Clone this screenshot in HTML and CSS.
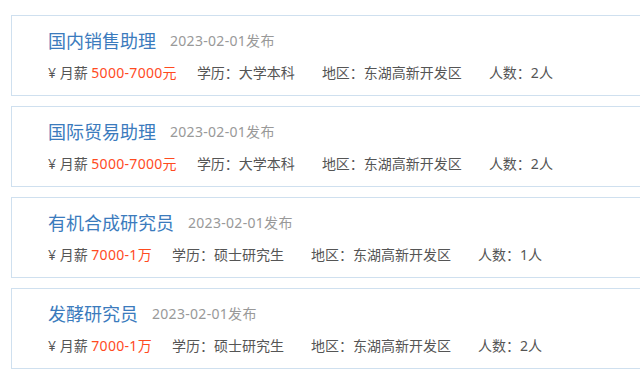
FILE: index.html
```html
<!DOCTYPE html>
<html lang="zh-CN">
<head>
    <meta charset="UTF-8">
    <meta name="viewport" content="width=device-width, initial-scale=1.0">
    <title>招聘职位</title>
    <link rel="stylesheet" href="styles.css">
</head>
<body>
    <div class="job-list">
        <div class="job-card">
            <div class="job-head">
                <a href="#" class="job-title">国内销售助理</a>
                <span class="job-date">2023-02-01发布</span>
            </div>
            <div class="job-info">
                <span class="salary">¥ 月薪 <em>5000-7000元</em></span>
                <span class="info-item">学历：大学本科</span>
                <span class="info-item">地区：东湖高新开发区</span>
                <span class="info-item">人数：2人</span>
            </div>
        </div>
        <div class="job-card">
            <div class="job-head">
                <a href="#" class="job-title">国际贸易助理</a>
                <span class="job-date">2023-02-01发布</span>
            </div>
            <div class="job-info">
                <span class="salary">¥ 月薪 <em>5000-7000元</em></span>
                <span class="info-item">学历：大学本科</span>
                <span class="info-item">地区：东湖高新开发区</span>
                <span class="info-item">人数：2人</span>
            </div>
        </div>
        <div class="job-card">
            <div class="job-head">
                <a href="#" class="job-title">有机合成研究员</a>
                <span class="job-date">2023-02-01发布</span>
            </div>
            <div class="job-info">
                <span class="salary">¥ 月薪 <em>7000-1万</em></span>
                <span class="info-item">学历：硕士研究生</span>
                <span class="info-item">地区：东湖高新开发区</span>
                <span class="info-item">人数：1人</span>
            </div>
        </div>
        <div class="job-card">
            <div class="job-head">
                <a href="#" class="job-title">发酵研究员</a>
                <span class="job-date">2023-02-01发布</span>
            </div>
            <div class="job-info">
                <span class="salary">¥ 月薪 <em>7000-1万</em></span>
                <span class="info-item">学历：硕士研究生</span>
                <span class="info-item">地区：东湖高新开发区</span>
                <span class="info-item">人数：2人</span>
            </div>
        </div>
    </div>
</body>
</html>
```

FILE: styles.css
```css
html, body {
    margin: 0;
    padding: 0;
    overflow: hidden;
    background-color: #fff;
    font-family: "Noto Sans", "Noto Sans CJK SC", sans-serif;
}

.job-list {
    padding: 15px 0 0 11px;
    display: flex;
    flex-direction: column;
    gap: 10px;
}

.job-card {
    border: 1px solid #cfe0ef;
    margin-right: -30px;
    padding: 9px 0 10px 36px;
}

.job-head {
    display: flex;
    align-items: center;
    height: 30px;
}

.job-title {
    font-size: 18px;
    color: #3b7bbd;
    text-decoration: none;
    margin-right: 14px;
}

.job-date {
    font-size: 14px;
    letter-spacing: 0.3px;
    color: #999;
}

.job-info {
    display: flex;
    margin-top: 6px;
    height: 24px;
    line-height: 24px;
    font-size: 14px;
    color: #555;
    white-space: nowrap;
}

.salary {
    margin-right: 20px;
}

.salary em {
    font-style: normal;
    letter-spacing: 0.3px;
    color: #ff4b1f;
}

.info-item {
    margin-right: 27px;
}
```
